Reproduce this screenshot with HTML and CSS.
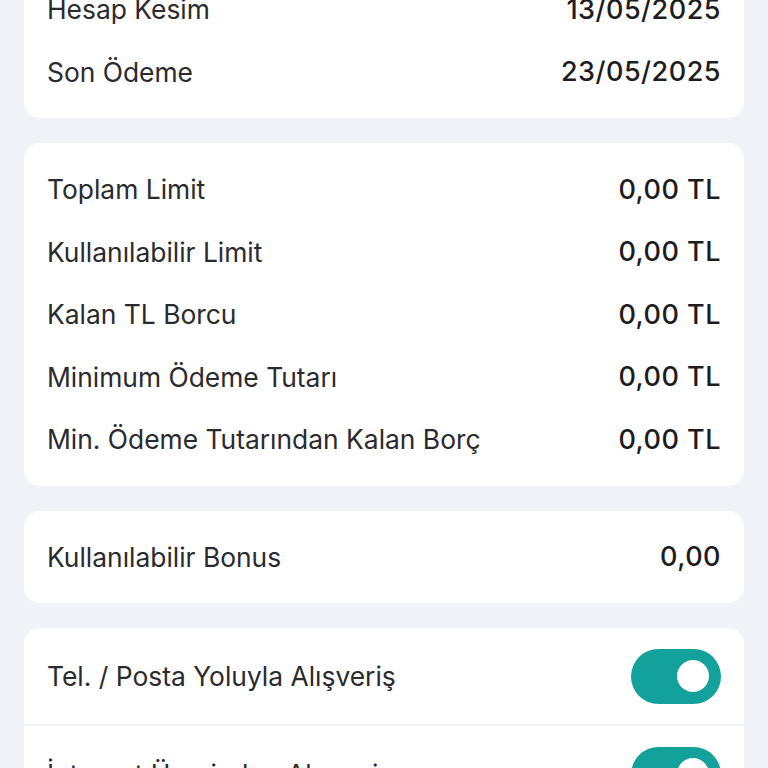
FILE: index.html
```html
<!DOCTYPE html>
<html lang="tr">
<head>
<meta charset="utf-8">
<title>Kart Detay</title>
<link rel="stylesheet" href="styles.css">
</head>
<body>
<main class="page">
  <section class="card">
    <div class="row"><span class="label">Hesap Kesim</span><span class="value">13/05/2025</span></div>
    <div class="row"><span class="label">Son Ödeme</span><span class="value">23/05/2025</span></div>
  </section>
  <section class="card">
    <div class="row"><span class="label">Toplam Limit</span><span class="value">0,00 TL</span></div>
    <div class="row"><span class="label">Kullanılabilir Limit</span><span class="value">0,00 TL</span></div>
    <div class="row"><span class="label">Kalan TL Borcu</span><span class="value">0,00 TL</span></div>
    <div class="row"><span class="label">Minimum Ödeme Tutarı</span><span class="value">0,00 TL</span></div>
    <div class="row"><span class="label">Min. Ödeme Tutarından Kalan Borç</span><span class="value">0,00 TL</span></div>
  </section>
  <section class="card">
    <div class="row"><span class="label">Kullanılabilir Bonus</span><span class="value">0,00</span></div>
  </section>
  <section class="card card-toggles">
    <div class="toggle-row"><span class="label">Tel. / Posta Yoluyla Alışveriş</span><span class="switch on"><span class="knob"></span></span></div>
    <div class="toggle-row"><span class="label">İnternet Üzerinden Alışveriş</span><span class="switch on"><span class="knob"></span></span></div>
  </section>
</main>
</body>
</html>
```

FILE: styles.css
```css
html, body {
  margin: 0;
  padding: 0;
  background: #f2f3f8;
  font-family: "Inter", "Noto Sans", sans-serif;
  color: #26262b;
  overflow: hidden;
}
.page {
  display: flex;
  flex-direction: column;
  gap: 25px;
  padding: 0 24px;
  margin-top: -37px;
}
.card {
  background: #ffffff;
  border-radius: 16px;
  padding: 15px 23px 15px 23px;
}
.row {
  height: 62.5px;
  display: flex;
  align-items: center;
  justify-content: space-between;
}
.label {
  font-size: 26.4px;
  font-weight: 400;
  color: #2a2a2f;
}
.value {
  font-size: 27px;
  font-weight: 500;
  letter-spacing: 0.5px;
  color: #1c1c21;
}
.card-toggles {
  padding: 0;
}
.toggle-row {
  height: 96px;
  display: flex;
  align-items: center;
  justify-content: space-between;
  padding: 0 23px 0 23px;
}
.toggle-row + .toggle-row {
  border-top: 2px solid #f1f2f5;
}
.switch {
  width: 90px;
  height: 55px;
  border-radius: 28px;
  background: #12a19b;
  display: flex;
  align-items: center;
  justify-content: flex-end;
  padding: 0 12px;
  box-sizing: border-box;
}
.knob {
  width: 32px;
  height: 32px;
  border-radius: 50%;
  background: #ffffff;
}
```
